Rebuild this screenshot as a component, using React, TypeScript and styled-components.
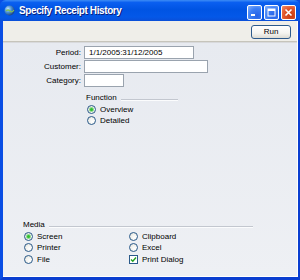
import React from 'react';
import styled, { createGlobalStyle } from 'styled-components';

const GlobalStyle = createGlobalStyle`
  html, body {
    margin: 0;
    padding: 0;
    width: 300px;
    height: 280px;
    overflow: hidden;
    background: #ffffff;
  }
  * {
    box-sizing: border-box;
  }
`;

const font = `'Liberation Sans', Arial, sans-serif`;

const Window = styled.div`
  width: 300px;
  height: 280px;
  display: flex;
  flex-direction: column;
  background: #0a4ee4;
  font-family: ${font};
  font-size: 8px;
  color: #000;
`;

const TitleBar = styled.div`
  height: 21px;
  flex: none;
  display: flex;
  align-items: center;
  padding: 0 4px 0 4px;
  gap: 4px;
  background: linear-gradient(
    to bottom,
    #3d8cf5 0%,
    #0a5ff0 12%,
    #0054e3 45%,
    #0458e8 80%,
    #0a4fd8 100%
  );
  border-radius: 6px 6px 0 0;
`;

const TitleText = styled.span`
  flex: 1;
  color: #fff;
  font-weight: bold;
  font-size: 10px;
  letter-spacing: -0.4px;
  text-shadow: 1px 1px 0 #0a1e7a;
  white-space: nowrap;
`;

const Controls = styled.div`
  display: flex;
  gap: 2px;
  margin-top: 3px;
`;

const CtlButton = styled.div<{ $close?: boolean }>`
  width: 15px;
  height: 15px;
  border: 1px solid #fff;
  border-radius: 2px;
  display: flex;
  align-items: center;
  justify-content: center;
  background: ${(p) =>
    p.$close
      ? 'radial-gradient(circle at 70% 75%, #c43b12 0%, #e2562a 55%, #f08e6a 100%)'
      : 'radial-gradient(circle at 70% 75%, #2662e6 0%, #3d7ff5 55%, #8ab4fb 100%)'};
`;

const Frame = styled.div`
  flex: 1;
  display: flex;
  flex-direction: column;
  border-left: 3px solid #0a4ee4;
  border-right: 2px solid #0a3ed0;
  border-bottom: 3px solid #0a3ed0;
  min-height: 0;
`;

const Inner = styled.div`
  flex: 1;
  display: flex;
  flex-direction: column;
  border-right: 1px solid #ffffff;
  border-bottom: 1px solid #ffffff;
  min-height: 0;
`;

const Toolbar = styled.div`
  height: 21px;
  flex: none;
  display: flex;
  justify-content: flex-end;
  align-items: center;
  padding-right: 6px;
  padding-top: 1px;
  background: #efeee9;
  border-bottom: 1px solid #c6c4bb;
`;

const RunButton = styled.button`
  width: 40px;
  height: 14px;
  padding: 0;
  border: 1px solid #2c5a8c;
  border-radius: 3px;
  background: linear-gradient(to bottom, #ffffff 0%, #f4f4f0 60%, #dcdbd3 100%);
  font-family: ${font};
  font-size: 8px;
  color: #000;
`;

const Sep = styled.div`
  height: 1px;
  flex: none;
  background: #d8d9dc;
`;

const Panel = styled.div`
  flex: 1;
  display: flex;
  flex-direction: column;
  padding: 3px 0 11px 0;
  background: linear-gradient(to bottom, #e7eaf0 0%, #eef0f4 100%);
`;

const FieldGrid = styled.div`
  display: grid;
  grid-template-columns: 78px auto;
  column-gap: 3px;
  row-gap: 1px;
  align-items: center;
`;

const Label = styled.label`
  text-align: right;
  white-space: nowrap;
`;

const Field = styled.div<{ $w: number }>`
  width: ${(p) => p.$w}px;
  height: 13px;
  background: #fff;
  border: 1px solid #9aa3ae;
  padding: 0 4px;
  line-height: 11px;
  white-space: nowrap;
`;

const Group = styled.div<{ $left: number; $top?: number }>`
  display: flex;
  flex-direction: column;
  margin-left: ${(p) => p.$left}px;
  margin-top: ${(p) => p.$top ?? 0}px;
`;

const GroupHead = styled.div<{ $w: number }>`
  width: ${(p) => p.$w}px;
  display: flex;
  align-items: flex-end;
  gap: 4px;
  height: 10px;
  line-height: 10px;
  margin-bottom: 1px;
`;

const Rule = styled.div`
  flex: 1;
  height: 2px;
  margin-bottom: 2px;
  border-top: 1px solid #c3c7cf;
  border-bottom: 1px solid #fbfcfd;
`;

const Options = styled.div`
  display: grid;
  grid-template-columns: 105px auto;
  grid-auto-flow: column;
  grid-template-rows: repeat(3, 11.5px);
  margin-left: 1px;
`;

const OptionsOne = styled.div`
  display: grid;
  grid-auto-rows: 11px;
  margin-left: 1px;
`;

const Option = styled.div`
  display: flex;
  align-items: center;
  gap: 4px;
  white-space: nowrap;
`;

const Radio = styled.span<{ $on?: boolean }>`
  width: 9px;
  height: 9px;
  border-radius: 50%;
  border: 1px solid #2a5a8a;
  background: radial-gradient(circle at 65% 65%, #ffffff 0%, #f2f2ee 50%, #d6d6cf 100%);
  display: flex;
  align-items: center;
  justify-content: center;
  &::after {
    content: '';
    display: ${(p) => (p.$on ? 'block' : 'none')};
    width: 3px;
    height: 3px;
    border-radius: 50%;
    background: #2fbf2f;
    box-shadow: 0 0 0 1px #8fd88f;
  }
`;

const Check = styled.span`
  width: 9px;
  height: 9px;
  border: 1px solid #2a5a8a;
  background: #fff;
  display: flex;
  align-items: center;
  justify-content: center;
`;

const Spacer = styled.div`
  flex: 1;
`;

const WinIcon = () => (
  <svg width="11" height="11" viewBox="0 0 11 11">
    <defs>
      <radialGradient id="g" cx="35%" cy="35%" r="70%">
        <stop offset="0%" stopColor="#c8e6ff" />
        <stop offset="50%" stopColor="#4a8fd0" />
        <stop offset="100%" stopColor="#1d3f7a" />
      </radialGradient>
    </defs>
    <circle cx="5.5" cy="5.5" r="5" fill="url(#g)" />
    <path d="M2 6 Q4 4 6 6 T10 5" stroke="#7fbf5a" strokeWidth="1.2" fill="none" />
  </svg>
);

const MinGlyph = () => (
  <svg width="9" height="9" viewBox="0 0 9 9">
    <rect x="1" y="6" width="4" height="2" fill="#fff" />
  </svg>
);

const MaxGlyph = () => (
  <svg width="9" height="9" viewBox="0 0 9 9">
    <rect x="1" y="1" width="7" height="7" fill="none" stroke="#fff" strokeWidth="1" />
    <rect x="1" y="1" width="7" height="2" fill="#fff" />
  </svg>
);

const CloseGlyph = () => (
  <svg width="9" height="9" viewBox="0 0 9 9">
    <path d="M1.5 1.5 L7.5 7.5 M7.5 1.5 L1.5 7.5" stroke="#fff" strokeWidth="1.6" />
  </svg>
);

const Tick = () => (
  <svg width="7" height="7" viewBox="0 0 7 7">
    <path d="M1 3.5 L2.8 5.3 L6 1.5" stroke="#21a121" strokeWidth="1.4" fill="none" />
  </svg>
);

export default function App() {
  return (
    <>
      <GlobalStyle />
      <Window>
        <TitleBar>
          <WinIcon />
          <TitleText>Specify Receipt History</TitleText>
          <Controls>
            <CtlButton>
              <MinGlyph />
            </CtlButton>
            <CtlButton>
              <MaxGlyph />
            </CtlButton>
            <CtlButton $close>
              <CloseGlyph />
            </CtlButton>
          </Controls>
        </TitleBar>
        <Frame>
          <Inner>
            <Toolbar>
              <RunButton>Run</RunButton>
            </Toolbar>
            <Sep />
            <Panel>
              <FieldGrid>
                <Label>Period:</Label>
                <Field $w={110}>1/1/2005:31/12/2005</Field>
                <Label>Customer:</Label>
                <Field $w={124}></Field>
                <Label>Category:</Label>
                <Field $w={40}></Field>
              </FieldGrid>

              <Group $left={83} $top={6}>
                <GroupHead $w={92}>
                  <span>Function</span>
                  <Rule />
                </GroupHead>
                <OptionsOne>
                  <Option>
                    <Radio $on />
                    Overview
                  </Option>
                  <Option>
                    <Radio />
                    Detailed
                  </Option>
                </OptionsOne>
              </Group>

              <Spacer />

              <Group $left={20}>
                <GroupHead $w={230}>
                  <span>Media</span>
                  <Rule />
                </GroupHead>
                <Options>
                  <Option>
                    <Radio $on />
                    Screen
                  </Option>
                  <Option>
                    <Radio />
                    Printer
                  </Option>
                  <Option>
                    <Radio />
                    File
                  </Option>
                  <Option>
                    <Radio />
                    Clipboard
                  </Option>
                  <Option>
                    <Radio />
                    Excel
                  </Option>
                  <Option>
                    <Check>
                      <Tick />
                    </Check>
                    Print Dialog
                  </Option>
                </Options>
              </Group>
            </Panel>
          </Inner>
        </Frame>
      </Window>
    </>
  );
}
